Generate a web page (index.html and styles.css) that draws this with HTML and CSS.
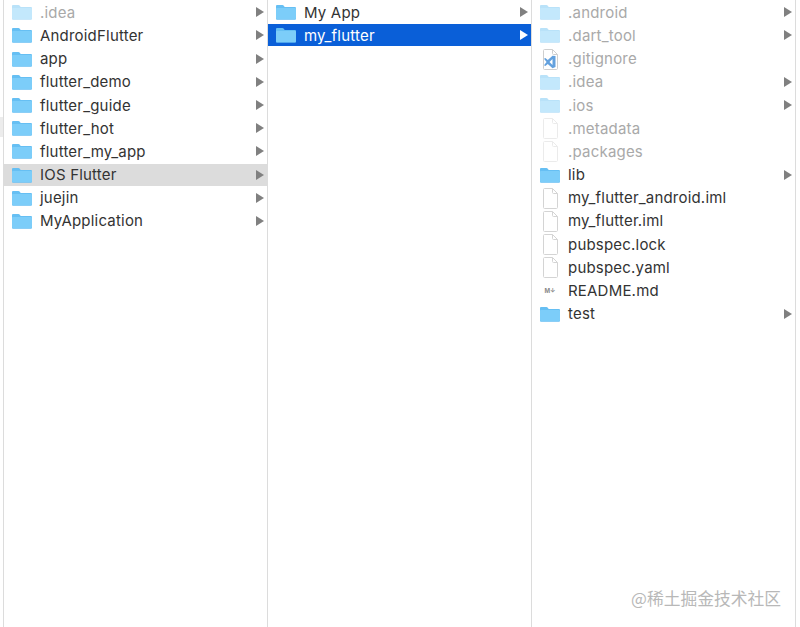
FILE: index.html
```html
<!DOCTYPE html>
<html lang="en">
<head>
<meta charset="utf-8">
<title>Finder</title>
<link rel="stylesheet" href="styles.css">
</head>
<body>
<svg class="defs" width="0" height="0" aria-hidden="true">
  <defs>
    <symbol id="folder" viewBox="0 0 20 16">
      <path d="M1.200 1h5.200c.7 0 1 .3 1.400.8l.9 1.200H18.800c.7 0 1.200.5 1.200 1.200v10.300c0 .8-.5 1.300-1.200 1.300H1.200C.5 15.800 0 15.300 0 14.500V2.200C0 1.500.5 1 1.200 1z" fill="#66bff3"/>
      <path d="M0 5C0 4.500.5 4 1.200 4h17.600c.7 0 1.200.5 1.200 1v9.300c0 .5-.4.700-1 .7H1c-.6 0-1-.2-1-.7z" fill="#7ccdf9"/>
    </symbol>
    <symbol id="file" viewBox="0 0 15 21">
      <path d="M.5 1.500c0-.6.400-1 1-1h8l5 5v14c0 .6-.4 1-1 1h-12c-.6 0-1-.4-1-1z" fill="#fff" stroke="#d4d4d4"/>
      <path d="M9.500.5v4c0 .6.400 1 1 1h4" fill="none" stroke="#d4d4d4"/>
    </symbol>
    <symbol id="code" viewBox="0 0 15 21">
      <path d="M.5 1.500c0-.6.400-1 1-1h8l5 5v14c0 .6-.4 1-1 1h-12c-.6 0-1-.4-1-1z" fill="#fff" stroke="#c4c4c4"/>
      <path d="M9.500.5v4c0 .6.400 1 1 1h4" fill="none" stroke="#c4c4c4"/>
      <path d="M12.500 7v11L9.500 19.200 4.800 15 2.300 17 1 16.200 3.600 13 1 9.800l1.300-.8L4.800 11 9.500 6.800z" fill="#3d8ad6"/>
      <path d="M9.500 10 6.500 13 9.500 16z" fill="#fff"/>
    </symbol>
    <symbol id="arrow" viewBox="0 0 8 10">
      <path d="M0 0 8 5 0 10z"/>
    </symbol>
  </defs>
</svg>

<main class="browser">
  <section class="column first">
    <div class="row faded"><svg class="icon folder"><use href="#folder"/></svg><span class="name">.idea</span><svg class="arrow"><use href="#arrow"/></svg></div>
    <div class="row"><svg class="icon folder"><use href="#folder"/></svg><span class="name">AndroidFlutter</span><svg class="arrow"><use href="#arrow"/></svg></div>
    <div class="row"><svg class="icon folder"><use href="#folder"/></svg><span class="name">app</span><svg class="arrow"><use href="#arrow"/></svg></div>
    <div class="row"><svg class="icon folder"><use href="#folder"/></svg><span class="name">flutter_demo</span><svg class="arrow"><use href="#arrow"/></svg></div>
    <div class="row"><svg class="icon folder"><use href="#folder"/></svg><span class="name">flutter_guide</span><svg class="arrow"><use href="#arrow"/></svg></div>
    <div class="row"><svg class="icon folder"><use href="#folder"/></svg><span class="name">flutter_hot</span><svg class="arrow"><use href="#arrow"/></svg></div>
    <div class="row"><svg class="icon folder"><use href="#folder"/></svg><span class="name">flutter_my_app</span><svg class="arrow"><use href="#arrow"/></svg></div>
    <div class="row path"><svg class="icon folder"><use href="#folder"/></svg><span class="name">IOS Flutter</span><svg class="arrow"><use href="#arrow"/></svg></div>
    <div class="row"><svg class="icon folder"><use href="#folder"/></svg><span class="name">juejin</span><svg class="arrow"><use href="#arrow"/></svg></div>
    <div class="row"><svg class="icon folder"><use href="#folder"/></svg><span class="name">MyApplication</span><svg class="arrow"><use href="#arrow"/></svg></div>
  </section>
  <section class="column">
    <div class="row"><svg class="icon folder"><use href="#folder"/></svg><span class="name">My App</span><svg class="arrow"><use href="#arrow"/></svg></div>
    <div class="row selected"><svg class="icon folder"><use href="#folder"/></svg><span class="name">my_flutter</span><svg class="arrow"><use href="#arrow"/></svg></div>
  </section>
  <section class="column">
    <div class="row faded"><svg class="icon folder"><use href="#folder"/></svg><span class="name">.android</span><svg class="arrow"><use href="#arrow"/></svg></div>
    <div class="row faded"><svg class="icon folder"><use href="#folder"/></svg><span class="name">.dart_tool</span><svg class="arrow"><use href="#arrow"/></svg></div>
    <div class="row faded"><svg class="icon doc code"><use href="#code"/></svg><span class="name">.gitignore</span></div>
    <div class="row faded"><svg class="icon folder"><use href="#folder"/></svg><span class="name">.idea</span><svg class="arrow"><use href="#arrow"/></svg></div>
    <div class="row faded"><svg class="icon folder"><use href="#folder"/></svg><span class="name">.ios</span><svg class="arrow"><use href="#arrow"/></svg></div>
    <div class="row faded"><svg class="icon doc"><use href="#file"/></svg><span class="name">.metadata</span></div>
    <div class="row faded"><svg class="icon doc"><use href="#file"/></svg><span class="name">.packages</span></div>
    <div class="row"><svg class="icon folder"><use href="#folder"/></svg><span class="name">lib</span><svg class="arrow"><use href="#arrow"/></svg></div>
    <div class="row"><svg class="icon doc"><use href="#file"/></svg><span class="name">my_flutter_android.iml</span></div>
    <div class="row"><svg class="icon doc"><use href="#file"/></svg><span class="name">my_flutter.iml</span></div>
    <div class="row"><svg class="icon doc"><use href="#file"/></svg><span class="name">pubspec.lock</span></div>
    <div class="row"><svg class="icon doc"><use href="#file"/></svg><span class="name">pubspec.yaml</span></div>
    <div class="row"><span class="icon md">M↓</span><span class="name">README.md</span></div>
    <div class="row"><svg class="icon folder"><use href="#folder"/></svg><span class="name">test</span><svg class="arrow"><use href="#arrow"/></svg></div>
  </section>
</main>
<div class="scroll-mark"></div>
<div class="watermark">@稀土掘金技术社区</div>
</body>
</html>
```
FILE: styles.css
```css
html, body {
  margin: 0;
  height: 100%;
  background: #fff;
  overflow: hidden;
}

body {
  position: relative;
  font-family: Inter, "Liberation Sans", sans-serif;
  color: #1f1f1f;
}

.defs {
  position: absolute;
}

.browser {
  display: flex;
  height: 627px;
  padding-left: 3px;
  width: 797px;
  box-sizing: border-box;
}

.column {
  width: 264px;
  box-sizing: border-box;
  border-right: 1px solid #dcdcdc;
  display: flex;
  flex-direction: column;
  gap: 1.2px;
  padding-top: 1.25px;
}

.column.first {
  width: 265px;
  border-left: 1px solid #dcdcdc;
}

.row {
  height: 22px;
  flex: none;
  display: flex;
  align-items: center;
  padding: 0 3px 0 8px;
  font-size: 15px;
  letter-spacing: 0.2px;
  color: #333;
}

.icon {
  flex: none;
  width: 20px;
  height: 16px;
  margin-right: 8px;
}

.doc {
  width: 15px;
  height: 21px;
  padding: 0 2px 0 3px;
  box-sizing: content-box;
  margin-top: 1px;
}

.md {
  height: auto;
  font-size: 6px;
  font-weight: 700;
  color: #888;
  text-align: center;
  letter-spacing: 0;
}

.name {
  flex: 1;
  white-space: nowrap;
}

.arrow {
  flex: none;
  width: 8px;
  height: 10px;
  fill: #808080;
}

.faded .name {
  color: #a9a9a9;
}

.faded .icon {
  opacity: 0.45;
}

.faded .code {
  opacity: 0.8;
}

.path {
  background: #dcdcdc;
}

.selected {
  background: #0a5fd8;
  color: #fff;
}

.selected .arrow {
  fill: #fff;
}

.scroll-mark {
  position: absolute;
  left: 0;
  top: 117px;
  width: 3px;
  height: 20px;
  background: #ececec;
}

.watermark {
  position: absolute;
  left: 631px;
  top: 587px;
  font-family: "Noto Sans CJK SC", sans-serif;
  font-size: 16.8px;
  line-height: 22px;
  color: #b8b8b8;
  white-space: nowrap;
}
```
